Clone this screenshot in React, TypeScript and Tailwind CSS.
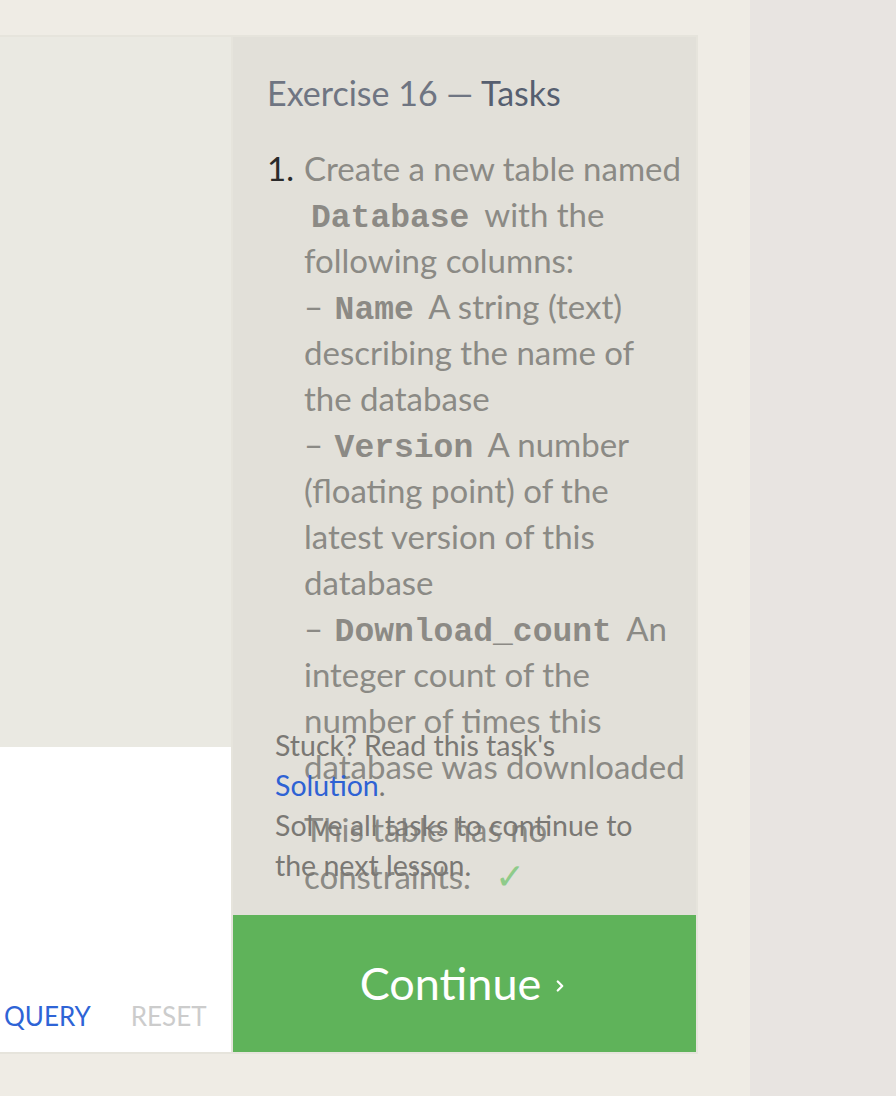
import { ChevronRight } from "lucide-react";

const sans = "font-['Lato','Open_Sans',sans-serif]";

function Code({ children }: { children: string }) {
  return (
    <code className="px-[7px] font-['Liberation_Mono',monospace] text-[33px] font-bold leading-none text-[#8c8a85]">
      {children}
    </code>
  );
}

function TaskList() {
  return (
    <ol className="mt-[32px] text-[33px] leading-[46px]">
      <li className="flex">
        <span className="w-[37px] shrink-0 text-[#2a2a2a]">1.</span>
        <div className="text-[#8b8a85]">
          <p>
            Create a new table named
            <br />
            <Code>Database</Code> with the
            <br />
            following columns:
            <br />
            <span className="mr-[-4px]">–</span> <Code>Name</Code> A string (text)
            <br />
            describing the name of
            <br />
            the database
            <br />
            <span className="mr-[-4px]">–</span> <Code>Version</Code> A number
            <br />
            (floating point) of the
            <br />
            latest version of this
            <br />
            database
            <br />
            <span className="mr-[-4px]">–</span> <Code>Download_count</Code> An
            <br />
            integer count of the
            <br />
            number of times this
            <br />
            database was downloaded
          </p>
          <p className="mt-[17px]">
            This table has no
            <br />
            constraints.
            <span className="ml-[24px] text-[36px] text-[#8fcb8a]">✓</span>
          </p>
        </div>
      </li>
    </ol>
  );
}

export default function App() {
  return (
    <div className={`flex min-h-screen bg-[#efece5] ${sans}`}>
      <div className="w-[750px] shrink-0 pt-[35px]">
        <div className="flex h-[1019px] w-[698px] border-y-2 border-r-2 border-[#e6e4dc]">
          <div className="flex w-[231px] shrink-0 flex-col">
            <div className="flex-1 bg-[#eae9e2]" />
            <div className="flex h-[305px] items-end bg-white pb-[18px]">
              <div className="flex gap-[40px] pl-[4px] text-[26px] leading-[36px]">
                <button className="text-[#2e64d6]" type="button">
                  QUERY
                </button>
                <button className="text-[#cccccc]" type="button">
                  RESET
                </button>
              </div>
            </div>
          </div>

          <div className="w-[2px] shrink-0 bg-[#e6e4dc]" />

          <div className="flex w-[463px] shrink-0 flex-col bg-[#e2e0d9]">
            <div className="relative flex-1 pl-[34px] pt-[36px]">
              <h2 className="text-[34px] leading-[40px]">
                <span className="text-[#6f7582]">Exercise 16 — </span>
                <span className="text-[#565f70]">Tasks</span>
              </h2>
              <TaskList />

              <div className="absolute bottom-[30px] left-[42px] text-[28.5px] leading-[40px] text-[#7a7874]">
                <p>
                  Stuck? Read this task's
                  <br />
                  <a className="text-[#2e62d4]" href="#">
                    Solution
                  </a>
                  .
                </p>
                <p>
                  Solve all tasks to continue to
                  <br />
                  the next lesson.
                </p>
              </div>
            </div>

            <button
              className="flex h-[137px] shrink-0 items-center justify-center gap-[10px] bg-[#5fb35a] text-[45px] text-white"
              type="button"
            >
              Continue
              <ChevronRight className="mt-[4px] h-[18px] w-[18px]" strokeWidth={3} />
            </button>
          </div>
        </div>
      </div>
      <div className="flex-1 bg-[#e8e4e1]" />
    </div>
  );
}
